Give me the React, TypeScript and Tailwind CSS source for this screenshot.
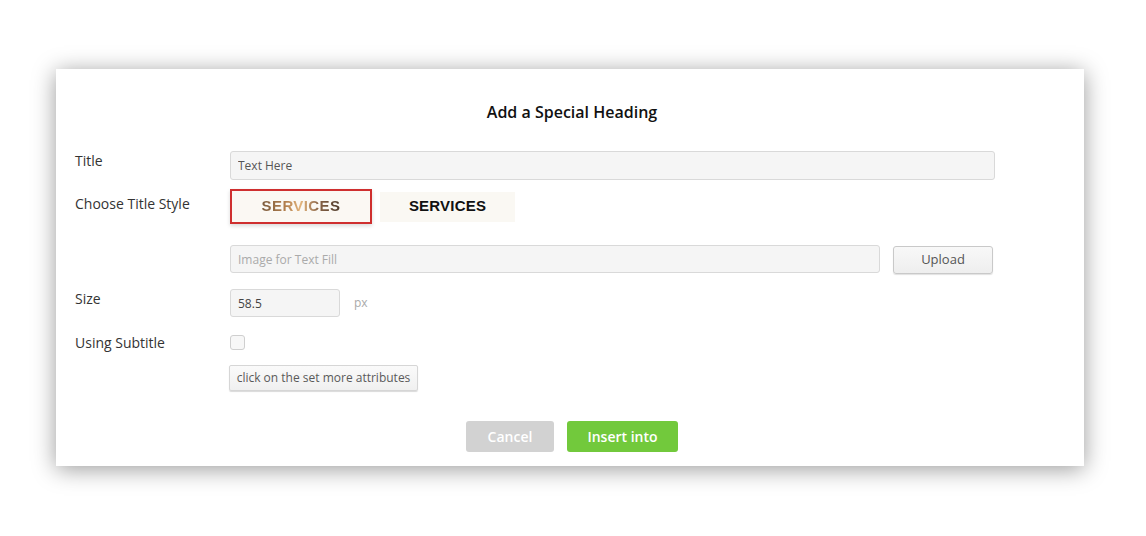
import React, { useState } from 'react';

const font = "font-['Open_Sans','Liberation_Sans',sans-serif]";

const App: React.FC = () => {
  const [style, setStyle] = useState(0);
  const [useSub, setUseSub] = useState(false);

  return (
    <div className={`w-[1146px] h-[536px] bg-white pt-[69px] pl-[56px] ${font}`}>
      <div className="w-[1028px] h-[397px] bg-white shadow-[0_3px_22px_rgba(0,0,0,0.4)] pt-[32px] flex flex-col">
        {/* Heading */}
        <h2 className="pl-[4px] text-center text-[16px] leading-[22px] font-semibold text-[#111]">
          Add a Special Heading
        </h2>

        <div className="flex flex-col pl-[19px] mt-[28px]">
          {/* Title */}
          <div className="flex">
            <label className="w-[155px] text-[14px] leading-[20px] text-[#333]">Title</label>
            <input
              readOnly
              value="Text Here"
              className="w-[765px] h-[29px] px-[7px] text-[12px] text-[#555] bg-[#f5f5f5] border border-[#d9d9d9] rounded-[3px] outline-none"
            />
          </div>

          {/* Title style */}
          <div className="flex mt-[9px]">
            <label className="w-[155px] pt-[5px] text-[14px] leading-[20px] text-[#333]">Choose Title Style</label>
            <div className="flex items-center gap-[8px]">
              <button
                onClick={() => setStyle(0)}
                className={`w-[142px] h-[35px] flex items-center justify-center bg-[#fbf8f3] border-2 ${style === 0 ? 'border-[#cf2f2f] shadow-[0_2px_4px_rgba(0,0,0,0.15)]' : 'border-transparent'}`}
              >
                <span className="font-['Liberation_Sans',Arial,sans-serif] font-bold text-[15px] tracking-[0.4px] bg-[linear-gradient(90deg,#7c5c3e_0%,#b27e4c_30%,#e3b47c_50%,#8a6446_72%,#4e3a2c_100%)] bg-clip-text text-transparent">
                  SERVICES
                </span>
              </button>
              <button
                onClick={() => setStyle(1)}
                className={`w-[135px] h-[30px] flex items-center justify-center bg-[#faf8f3] border-2 ${style === 1 ? 'border-[#cf2f2f]' : 'border-transparent'}`}
              >
                <span className="font-['Liberation_Sans',Arial,sans-serif] font-bold text-[15px] tracking-[0.2px] text-[#111]">
                  SERVICES
                </span>
              </button>
            </div>
          </div>

          {/* Image fill */}
          <div className="flex mt-[21px]">
            <div className="w-[155px]" />
            <input
              readOnly
              placeholder="Image for Text Fill"
              className="w-[650px] h-[28px] px-[7px] text-[12px] text-[#555] placeholder:text-[#aaa] bg-[#f5f5f5] border border-[#d9d9d9] rounded-[3px] outline-none"
            />
            <button className="ml-[13px] mt-[1px] w-[100px] h-[28px] text-[13px] text-[#555] bg-[linear-gradient(#f8f8f8,#eeeeee)] border border-[#c9c9c9] rounded-[3px] shadow-[0_1px_1px_rgba(0,0,0,0.12)]">
              Upload
            </button>
          </div>

          {/* Size */}
          <div className="flex items-start mt-[15px]">
            <label className="w-[155px] text-[14px] leading-[20px] text-[#333]">Size</label>
            <input
              readOnly
              value="58.5"
              className="w-[110px] h-[28px] px-[7px] text-[12px] text-[#444] bg-[#f5f5f5] border border-[#d9d9d9] rounded-[3px] outline-none"
            />
            <span className="ml-[14px] mt-[5px] text-[12px] text-[#aaa]">px</span>
          </div>

          {/* Subtitle */}
          <div className="flex items-start mt-[16px]">
            <label className="w-[155px] text-[14px] leading-[20px] text-[#333]">Using Subtitle</label>
            <button
              onClick={() => setUseSub(!useSub)}
              className={`mt-[2px] w-[15px] h-[15px] rounded-[3px] border border-[#cfcfcf] ${useSub ? 'bg-[#72c93c]' : 'bg-[#f7f7f7]'}`}
            />
          </div>

          {/* More attributes */}
          <div className="flex mt-[12px]">
            <div className="w-[154px]" />
            <button className="w-[189px] h-[26px] text-[12px] text-[#5a5a5a] bg-[linear-gradient(#fafafa,#f0f0f0)] border border-[#d6d6d6] rounded-[2px] shadow-[0_1px_1px_rgba(0,0,0,0.15)]">
              click on the set more attributes
            </button>
          </div>
        </div>

        {/* Actions */}
        <div className="flex justify-center gap-[13px] mt-[30px] pl-[4px]">
          <button className="w-[88px] h-[31px] rounded-[3px] bg-[#d2d2d2] text-white text-[14px] font-semibold">
            Cancel
          </button>
          <button className="w-[111px] h-[31px] rounded-[3px] bg-[#72c93c] text-white text-[14px] font-semibold">
            Insert into
          </button>
        </div>
      </div>
    </div>
  );
};

export default App;
